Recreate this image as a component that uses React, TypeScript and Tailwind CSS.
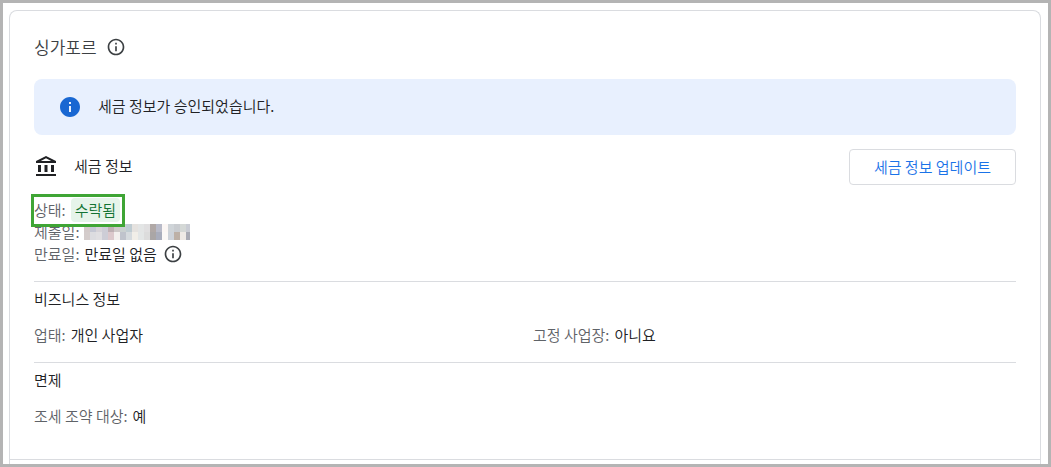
import type { ReactNode } from "react";

const mosaic = [
  ["#d3cac9", "#c5c8d4", "#d6d3d8", "#cdcdd6", "#bfb0b4", "#cfc9c9", "#c9d0d0", "#bfccd2", "#e5e2df", "#e3e5e5", "#e0dfe0", "#b0a8a6", "#b8bac8", "#fbf6f4", "#cfd4d8", "#c9ccd0", "#d4d8d6", "#c9ccd4"],
  ["#d4cccb", "#dcdce0", "#e0dfe2", "#cdcdd6", "#dcc8cc", "#f3efee", "#bfc3cc", "#d5dade", "#f1eee8", "#e3e6e6", "#dcdcdc", "#aaa6a6", "#a9adbc", "#fbf8f6", "#ced3da", "#bdb0a6", "#eeeae6", "#a9abb5"],
];

function InfoOutline() {
  return (
    <svg viewBox="0 0 24 24" className="size-5 shrink-0 fill-[#3c4043]" aria-hidden="true">
      <path d="M11 7h2v2h-2zm0 4h2v6h-2zm1-9C6.480 2 2 6.480 2 12s4.480 10 10 10 10-4.480 10-10S17.520 2 12 2zm0 18c-4.410 0-8-3.590-8-8s3.590-8 8-8 8 3.590 8 8-3.590 8-8 8z" />
    </svg>
  );
}

function Field({ label, children }: { label: string; children: ReactNode }) {
  return (
    <div className="flex items-center gap-[5px]">
      <dt className="text-[#5f6368]">{label}:</dt>
      <dd className="flex items-center gap-1.5">{children}</dd>
    </div>
  );
}

export default function App() {
  return (
    <div className="flex min-h-screen flex-col border-3 border-[#b4b4b4] bg-white pt-[7px] pr-[7px] pl-[6px] font-['Noto_Sans_CJK_KR',sans-serif] text-[15px] leading-5 font-[350] text-[#202124]">
      <main className="flex grow flex-col rounded-t-lg border border-b-0 border-[#dadce0]">
        <div className="px-6 pt-6 pb-[33px]">
          <header className="flex h-6 items-center gap-[9px]">
            <h1 className="text-[17px] text-[#3c4043]">싱가포르</h1>
            <button type="button" aria-label="싱가포르"><InfoOutline /></button>
          </header>

          <div role="status" className="mt-5 flex h-14 items-center gap-4 rounded-lg bg-[#e8f0fe] px-6">
            <svg viewBox="0 0 24 24" className="size-6 shrink-0 fill-[#1967d2]" aria-hidden="true">
              <path d="M12 2C6.480 2 2 6.480 2 12s4.480 10 10 10 10-4.480 10-10S17.520 2 12 2zm1 15h-2v-6h2v6zm0-8h-2V7h2v2z" />
            </svg>
            <p className="pb-0.5">세금 정보가 승인되었습니다.</p>
          </div>

          <div className="mt-[14px] flex h-9 items-center justify-between">
            <div className="flex items-center gap-4">
              <svg viewBox="0 0 24 24" className="size-6 shrink-0 fill-[#202124]" aria-hidden="true">
                <path fillRule="evenodd" d="M12 1L2 6v2h20V6L12 1zm0 2.300L17.200 6H6.800L12 3.300zM4 10h3v7H4zM10.500 10h3v7h-3zM17 10h3v7h-3zM2 19h20v2H2z" />
              </svg>
              <h2 className="pb-0.5">세금 정보</h2>
            </div>
            <button type="button" className="h-9 rounded border border-[#dadce0] px-6 text-[#1a73e8]">세금 정보 업데이트</button>
          </div>

          <dl className="mt-[14px] grid auto-rows-[22px] items-center">
            <div className="relative">
              <Field label="상태">
                <span className="rounded bg-[#e6f4ea] px-1 leading-6 text-[#137333]">수락됨</span>
              </Field>
              <div className="absolute -top-1 -left-[3px] h-[33px] w-[94px] border-3 border-[#3fa535]" />
            </div>
            <Field label="제출일">
              <span className="grid h-4 grid-cols-[repeat(17,6px)_4px]" aria-hidden="true">
                {mosaic.flat().map((color, i) => (
                  <span key={i} style={{ backgroundColor: color }} />
                ))}
              </span>
            </Field>
            <Field label="만료일">
              만료일 없음
              <button type="button" aria-label="만료일"><InfoOutline /></button>
            </Field>
          </dl>

          <section className="mt-4 border-t border-[#dadce0] pt-[7px]">
            <h3>비즈니스 정보</h3>
            <dl className="mt-4 grid grid-cols-2 gap-4">
              <Field label="업태">개인 사업자</Field>
              <Field label="고정 사업장">아니요</Field>
            </dl>
          </section>

          <section className="mt-[17px] border-t border-[#dadce0] pt-[7px]">
            <h3>면제</h3>
            <dl className="mt-4">
              <Field label="조세 조약 대상">예</Field>
            </dl>
          </section>
        </div>
        <div className="grow border-t border-[#dadce0]" />
      </main>
    </div>
  );
}
